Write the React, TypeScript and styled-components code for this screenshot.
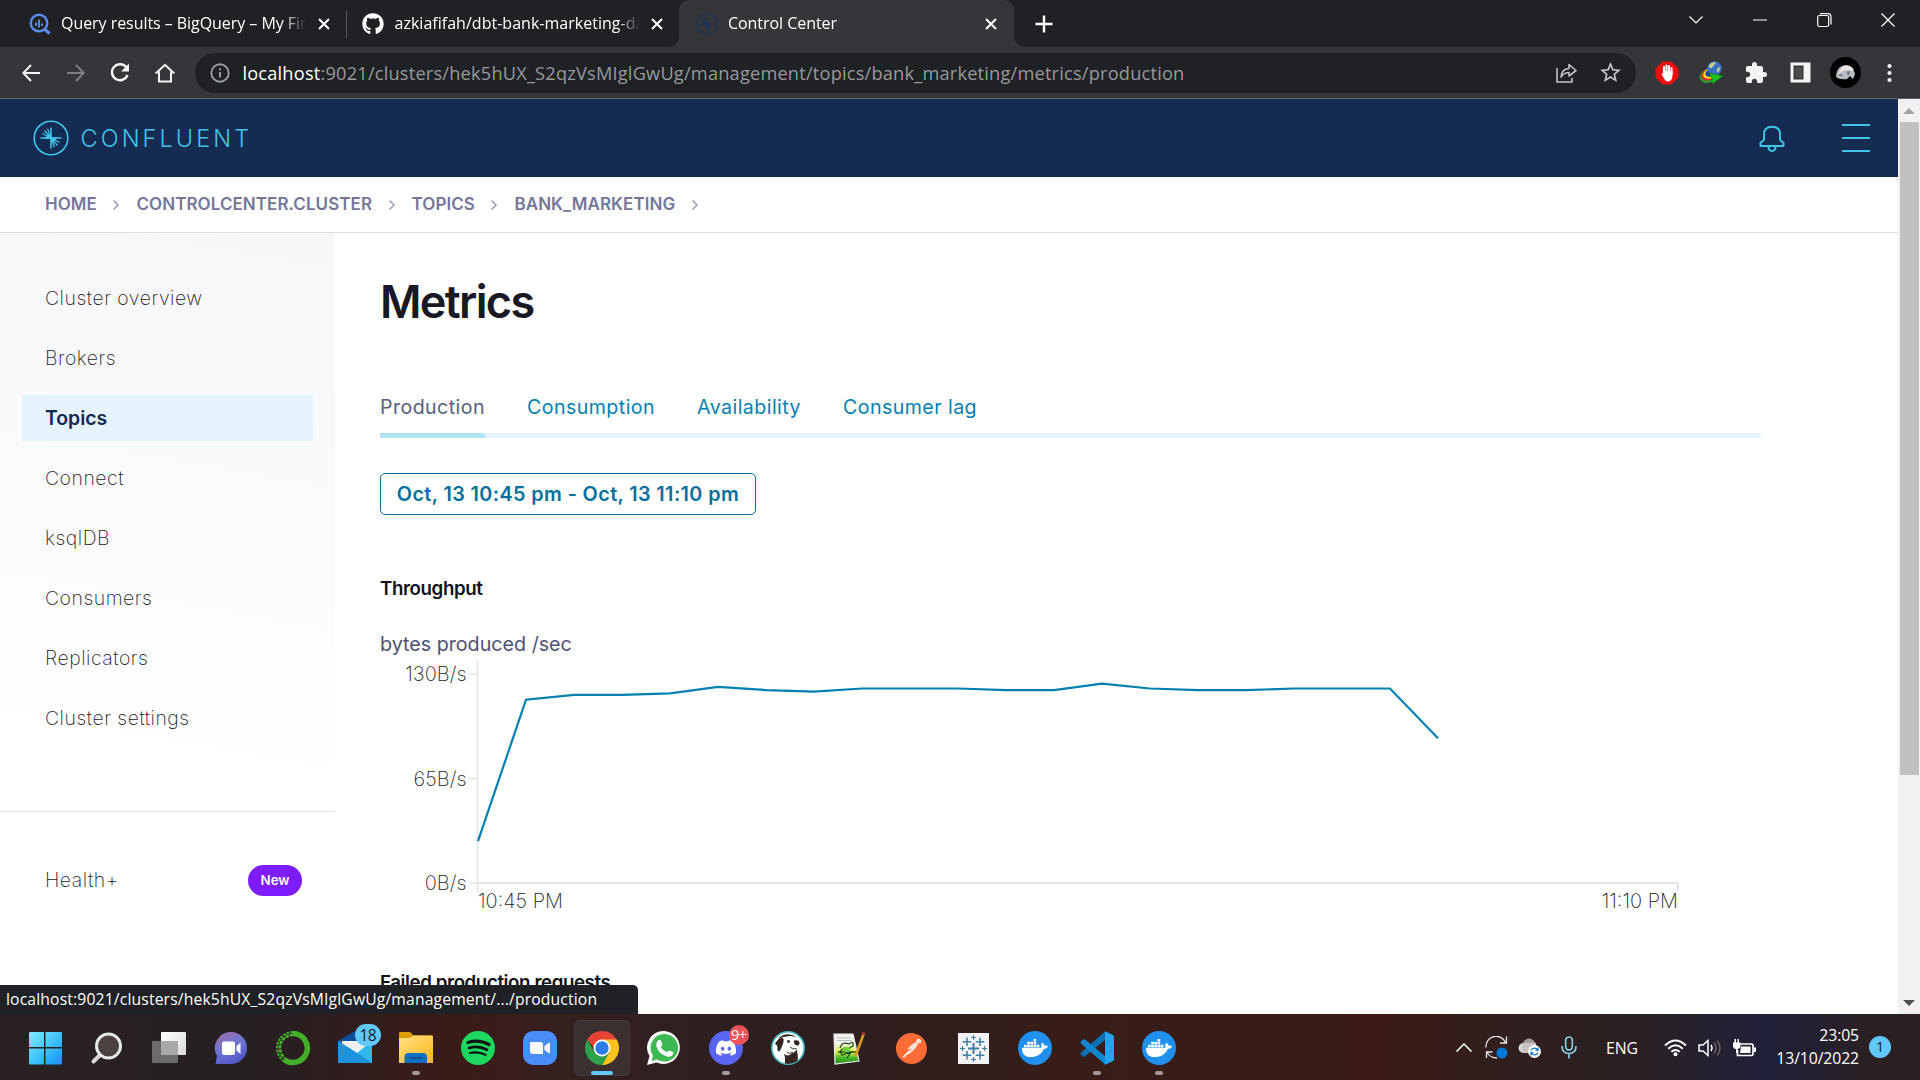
import React from "react";
import styled, { createGlobalStyle, css } from "styled-components";
import { SiPostman } from "react-icons/si";
import { FaDocker, FaDiscord, FaGithub } from "react-icons/fa";
import { MdExtension, MdStarBorder } from "react-icons/md";

const ui = `"Open Sans", "Noto Sans", "Liberation Sans", sans-serif`;
const body = `Inter, "Liberation Sans", sans-serif`;

const GlobalStyle = createGlobalStyle`
  * { box-sizing: border-box; }
  body { margin: 0; background: #fff; overflow: hidden; }
  svg { display: block; flex: none; }
`;

const Screen = styled.div`
  position: relative;
  display: flex;
  flex-direction: column;
  width: 1920px;
  height: 1080px;
  overflow: hidden;
  font-family: ${body};
`;

/* ---------- browser chrome ---------- */

const TabStrip = styled.div`
  display: flex;
  flex: none;
  height: 47px;
  padding-left: 12px;
  background: #202124;
  color: #fff;
  font-family: ${ui};
`;

const Tab = styled.div<{ $active?: boolean; $divided?: boolean }>`
  position: relative;
  display: flex;
  align-items: center;
  width: 333.5px;
  height: 47px;
  padding-left: 16px;
  ${(p) =>
    p.$active &&
    css`
      background: #35363a;
      border-radius: 10px 10px 0 0;
      width: 335px;
      &::before,
      &::after {
        content: "";
        position: absolute;
        bottom: 0;
        width: 10px;
        height: 10px;
      }
      &::before {
        left: -10px;
        background: radial-gradient(circle at 0 0, transparent 9.5px, #35363a 10px);
      }
      &::after {
        right: -10px;
        background: radial-gradient(circle at 100% 0, transparent 9.5px, #35363a 10px);
      }
    `}
  ${(p) =>
    p.$divided &&
    css`
      &::before {
        content: "";
        position: absolute;
        left: 0;
        top: 11px;
        width: 1px;
        height: 27px;
        background: #55575b;
      }
    `}
`;

const TabIcon = styled.span`
  display: flex;
  align-items: center;
  justify-content: center;
  width: 23px;
  height: 23px;
`;

const TabTitle = styled.span<{ $spacing: number }>`
  width: 245px;
  margin: -1px 0 0 10px;
  overflow: hidden;
  white-space: nowrap;
  font-size: 16px;
  line-height: 24px;
  letter-spacing: ${(p) => p.$spacing}px;
  -webkit-mask-image: linear-gradient(90deg, #000 222px, transparent 245px);
  mask-image: linear-gradient(90deg, #000 222px, transparent 245px);
`;

const TabClose = styled.span`
  display: flex;
  justify-content: center;
  width: 34px;
  padding-left: 1px;
`;

const NewTab = styled.div`
  display: flex;
  align-items: center;
  padding-left: 21px;
`;

const WindowControls = styled.div`
  display: flex;
  margin-left: auto;
  height: 40px;
  align-items: center;
  > span {
    display: flex;
    justify-content: center;
    width: 64px;
  }
`;

const Toolbar = styled.div`
  display: flex;
  flex: none;
  align-items: center;
  height: 52px;
  padding-left: 9px;
  background: #35363a;
  border-bottom: 1px solid #5c5e62;
`;

const ToolButton = styled.span`
  display: flex;
  justify-content: center;
  width: 44.6px;
  color: #f1f3f4;
`;

const Omnibox = styled.div`
  display: flex;
  align-items: center;
  width: 1441px;
  height: 40px;
  margin-left: 8px;
  margin-right: 8px;
  padding: 0 14px 0 15px;
  border-radius: 20px;
  background: #202124;
  color: #9aa0a6;
`;

const Url = styled.span`
  flex: 1;
  margin-left: 12px;
  font-family: ${ui};
  font-size: 18.2px;
  line-height: 24px;
  letter-spacing: 0.21px;
  white-space: nowrap;
  color: #96999c;
  b {
    font-weight: 400;
    color: #fff;
  }
`;

const OmniAction = styled.span`
  display: flex;
  justify-content: center;
  width: 24px;
  margin-left: 20px;
  color: #c4c7c9;
`;

/* ---------- page ---------- */

const Viewport = styled.div`
  display: flex;
  flex: 1;
  min-height: 0;
`;

const Page = styled.div`
  display: flex;
  flex-direction: column;
  width: 1898px;
  min-height: 0;
`;

const Scrollbar = styled.div`
  display: flex;
  flex-direction: column;
  justify-content: space-between;
  align-items: center;
  width: 22px;
  padding: 9px 0 8px;
  background: #f1f1f1;
`;

const Thumb = styled.div`
  width: 19px;
  height: 653px;
  margin: 8px 0 auto 1px;
  background: #c1c1c1;
`;

const Header = styled.header`
  display: flex;
  flex: none;
  align-items: center;
  height: 78px;
  padding: 0 28px 0 33px;
  background: #152c52;
  color: #40c4e8;
`;

const Brand = styled.span`
  margin: 2px 0 0 11.5px;
  font-size: 23.5px;
  font-weight: 300;
  line-height: 30px;
  letter-spacing: 3.1px;
`;

const HeaderActions = styled.div`
  display: flex;
  align-items: center;
  gap: 57px;
  margin-left: auto;
  > svg {
    margin-top: 2px;
  }
`;

const Burger = styled.span`
  display: grid;
  gap: 11px;
  width: 28px;
  height: 28px;
  &::before,
  &::after {
    content: "";
  }
  &::before,
  &::after,
  > i {
    height: 2px;
    background: #40c4e8;
  }
`;

const Breadcrumbs = styled.nav`
  display: flex;
  flex: none;
  align-items: center;
  height: 56px;
  padding: 0 0 2px 45px;
  border-bottom: 1px solid #dfe0e6;
  color: #75769a;
  font-size: 17px;
  font-weight: 600;
  letter-spacing: 0.06px;
`;

const Crumb = styled.span`
  display: flex;
  align-items: center;
  svg {
    margin: 2px 16px 0 15.5px;
  }
`;

const Columns = styled.div`
  display: flex;
  flex: 1;
  min-height: 0;
`;

const Sidebar = styled.aside`
  width: 335px;
  flex: none;
  background: linear-gradient(190deg, #f7f7fa 0%, #fbfbfc 35%, #ffffff 68%);
`;

const NavList = styled.div`
  display: flex;
  flex-direction: column;
  gap: 14px;
  height: 579px;
  padding: 42px 22px 0;
  border-bottom: 1px solid #dfe0e6;
`;

const NavItem = styled.a<{ $active?: boolean }>`
  flex: none;
  height: 46px;
  padding-left: 23px;
  font-size: 19.4px;
  line-height: 47.5px;
  letter-spacing: 0.55px;
  font-weight: 250;
  color: #191924;
  ${(p) =>
    p.$active &&
    css`
      background: #e5f4fc;
      color: #16294e;
      font-weight: 600;
      letter-spacing: 0;
    `}
`;

const NavFooter = styled.div`
  display: flex;
  align-items: center;
  justify-content: space-between;
  height: 46px;
  margin: 45px 11px 0 22px;
  padding-right: 22px;
`;

const Badge = styled.span`
  width: 54px;
  height: 31px;
  border-radius: 16px;
  background: #7c1cff;
  color: #fff;
  font-size: 13.3px;
  font-weight: 600;
  line-height: 31px;
  text-align: center;
`;

const Main = styled.main`
  flex: 1;
  display: flex;
  flex-direction: column;
  align-items: flex-start;
  padding-left: 45px;
  overflow: hidden;
`;

const Title = styled.h1`
  margin: 41px 0 0;
  font-size: 45px;
  font-weight: 600;
  line-height: 56px;
  letter-spacing: -1.65px;
  color: #191924;
`;

const MetricTabs = styled.div`
  display: flex;
  gap: 42px;
  width: 1381px;
  height: 60px;
  margin-top: 48px;
  border-bottom: 5px solid #e5f4fc;
`;

const MetricTab = styled.a<{ $active?: boolean }>`
  height: 60px;
  font-size: 19.6px;
  line-height: 58px;
  letter-spacing: 0.44px;
  color: ${(p) => (p.$active ? "#565f80" : "#0480b0")};
  border-bottom: 5px solid ${(p) => (p.$active ? "#b2e3f1" : "transparent")};
`;

const RangeButton = styled.button`
  width: 376px;
  height: 42px;
  margin: 35px 0 0;
  padding: 0;
  border: 1.5px solid #04709b;
  border-radius: 5px;
  background: #fff;
  color: #04709b;
  font: 600 19.8px/38px ${body};
  letter-spacing: 0.4px;
  white-space: nowrap;
`;

const SectionTitle = styled.h2<{ $top: number }>`
  margin: ${(p) => p.$top}px 0 0;
  font-size: 18.7px;
  font-weight: 600;
  line-height: 24px;
  letter-spacing: -0.4px;
  color: #111118;
`;

const ChartTitle = styled.div`
  margin-top: 31px;
  font-size: 19.7px;
  line-height: 24px;
  color: #4f5175;
`;

const ChartSvg = styled.svg`
  overflow: visible;
  text {
    font-family: ${body};
    font-size: 20px;
    font-weight: 250;
    fill: #1c1c24;
  }
`;

/* ---------- overlay and taskbar ---------- */

const StatusBubble = styled.div`
  position: absolute;
  left: 0;
  bottom: 66px;
  width: 638px;
  height: 29px;
  padding-left: 6px;
  border-top-right-radius: 5px;
  background: #202124;
  color: #fff;
  font-family: ${ui};
  font-size: 15.7px;
  line-height: 29px;
  letter-spacing: 0.15px;
  white-space: nowrap;
`;

const Taskbar = styled.div`
  display: flex;
  flex: none;
  height: 66px;
  padding-left: 14.5px;
  background: linear-gradient(
    90deg,
    #2a2122 0%,
    #261f22 13%,
    #3b1b18 24%,
    #32201f 30%,
    #2d1f20 42%,
    #371d18 56%,
    #3b1a15 72%,
    #301f1d 78%,
    #2b2022 85%,
    #20203a 92%,
    #2b2021 98%
  );
  color: #fff;
  font-family: ${ui};
`;

const Slot = styled.div`
  position: relative;
  display: flex;
  justify-content: center;
  align-items: center;
  width: 61.85px;
  height: 66px;
  padding-top: 2px;
`;

const Tile = styled.div<{ $on?: boolean }>`
  display: flex;
  align-items: center;
  justify-content: center;
  width: 56px;
  height: 56px;
  border-radius: 6px;
  ${(p) => p.$on && `background: #3b302f; box-shadow: inset 0 0 0 1px #443938;`}
`;

const Running = styled.i<{ $on?: boolean }>`
  position: absolute;
  bottom: 5px;
  left: 50%;
  width: ${(p) => (p.$on ? 22 : 8)}px;
  height: 4px;
  border-radius: 2px;
  transform: translateX(-50%);
  background: ${(p) => (p.$on ? "#60c8fb" : "#a39a99")};
`;

const Count = styled.b<{ $tone: "blue" | "red" }>`
  position: absolute;
  border-radius: 12px;
  text-align: center;
  font-weight: 400;
  ${(p) =>
    p.$tone === "blue"
      ? `left: 31px; top: 10px; width: 26px; height: 22px; line-height: 22px; font-size: 15.5px; background: #60c8fb; color: #10202c; letter-spacing: -0.6px;`
      : `left: 34px; top: 11px; width: 20px; height: 20px; line-height: 19px; font-size: 14.5px; background: #f0525a; color: #fff; letter-spacing: -0.6px;`}
`;

const Round = styled.span<{ $bg: string; $r?: number }>`
  display: flex;
  align-items: center;
  justify-content: center;
  width: 34px;
  height: 34px;
  border-radius: ${(p) => p.$r ?? 17}px;
  background: ${(p) => p.$bg};
  color: #fff;
`;

const Orbit = styled.span`
  display: flex;
  border-radius: 50%;
  color: #ff6c37;
  background: radial-gradient(circle, #fff 58%, transparent 60%);
`;

const Tray = styled.div`
  display: flex;
  align-items: center;
  margin-left: auto;
  padding-right: 29px;
`;

const TraySlot = styled.span<{ $w: number }>`
  display: flex;
  justify-content: center;
  width: ${(p) => p.$w}px;
  padding-top: 1px;
  font-size: 15.8px;
  letter-spacing: -0.1px;
`;

const Clock = styled.span`
  width: 94px;
  margin-right: 10px;
  text-align: right;
  font-size: 15.8px;
  line-height: 23px;
  letter-spacing: -0.12px;
`;

const Notice = styled.span`
  width: 22px;
  height: 22px;
  margin-top: -1px;
  border-radius: 50%;
  background: #60c8fb;
  color: #12202a;
  font-size: 14px;
  line-height: 22px;
  text-align: center;
`;

/* ---------- drawings ---------- */

const Close = () => (
  <svg width="12" height="12" viewBox="0 0 12 12" stroke="#fff" strokeWidth="2">
    <path d="M1 1L11 11M11 1L1 11" />
  </svg>
);

const Burst = ({ size, color, width }: { size: number; color: string; width: number }) => (
  <svg width={size} height={size} viewBox="0 0 36 36" fill="none" stroke={color} strokeWidth={width}>
    <circle cx="18" cy="18" r="16.8" />
    <path d="M7.5 18H28.5M18 7.5V28.5" />
    <path d="M18 18L9.5 13.5M18 18L11.5 10.5M18 18L14.5 8.8M18 18L26.5 22.5M18 18L24.5 25.5M18 18L21.5 27.2" strokeWidth={width * 0.8} />
    <path d="M18 18L13 17.9L16 15zM18 18L23 18.1L20 21z" fill={color} />
  </svg>
);

const BigQueryMark = () => (
  <svg width="22" height="22" viewBox="0 0 22 22" fill="none" stroke="#5b8bea">
    <circle cx="10" cy="10" r="8.3" strokeWidth="2.4" />
    <path d="M16 16.5L20.5 20.5" strokeWidth="3.2" />
    <path d="M7 9.5V13M10 6.5V14.5M13 10.5V13" strokeWidth="1.9" />
  </svg>
);

const Chevron = () => (
  <svg width="8" height="12" viewBox="0 0 8 12" fill="none" stroke="#9a9bb3" strokeWidth="1.5">
    <path d="M1.5 1.5L6 6L1.5 10.5" />
  </svg>
);

const Bell = () => (
  <svg width="26" height="28" viewBox="0 0 26 28" fill="none" stroke="#40c4e8" strokeWidth="1.9" strokeLinejoin="round">
    <path d="M5 14.5V9.5Q5 1.8 13 1.8Q21 1.8 21 9.5V14.5Q21.2 16 24.5 17.5V21H1.5V17.5Q4.8 16 5 14.5Z" />
    <path d="M9.5 21.5Q9.5 26 13 26Q16.5 26 16.5 21.5" />
  </svg>
);

const DownloadGlobe = () => (
  <svg width="24" height="23" viewBox="0 0 24 23">
    <ellipse cx="10" cy="14.5" rx="10" ry="7" fill="#2f9a35" transform="rotate(-22 10 14)" />
    <ellipse cx="10.5" cy="13.5" rx="8.5" ry="5.6" fill="#e7261c" transform="rotate(-22 10 14)" />
    <ellipse cx="11.5" cy="13" rx="7.2" ry="4.8" fill="#ffe21c" transform="rotate(-22 10 14)" />
    <ellipse cx="13" cy="12.5" rx="6" ry="4" fill="#1d3fa8" transform="rotate(-22 10 14)" />
    <circle cx="15.5" cy="7.5" r="7.2" fill="#3a70c8" />
    <path d="M10 4Q13 0.5 17 1.5L14.5 5L12 7.5Q9.5 7 10 4ZM18.5 7L21.5 6L20 11L17.5 10.5Z" fill="#c3cf8a" />
    <path d="M10 12L24 15L13 23L13.5 18Z" fill="#19c41c" stroke="#12701a" strokeWidth="0.6" />
  </svg>
);

const AdHand = () => (
  <svg width="24" height="24" viewBox="0 0 24 24">
    <path d="M7.5 0.5H16.5L23.5 7.5V16.5L16.5 23.5H7.5L0.5 16.5V7.5Z" fill="#ea0f0f" />
    <path d="M9 12V6M11.5 12V4.5M14 12V5M16.5 13V7" stroke="#fff" strokeWidth="2.1" strokeLinecap="round" />
    <path d="M8 10H17.5V14Q17.5 20 13 20.5Q10.5 20.5 9 17.5L6.5 13Q7 11.5 8.5 13Z" fill="#fff" />
  </svg>
);

const Avatar = () => (
  <svg width="31" height="31" viewBox="0 0 31 31">
    <circle cx="15.5" cy="15.5" r="15.5" fill="#000" />
    <path d="M6 20Q6 12 12 9Q18 6 23 11L25 17L23 22L20 19L17 22Q10 23 6 20Z" fill="#b9bdc6" />
    <path d="M12 10Q18 7 22 11L23 14L15 13L8 17Z" fill="#ece7e2" />
    <path d="M17 14.5L20 14L19 18L17.5 18ZM8 18L12 17L12 19.5Z" fill="#6c6f76" />
  </svg>
);

const WindowsLogo = () => (
  <svg width="34" height="34" viewBox="0 0 34 34">
    <defs>
      <linearGradient id="win" x1="0" y1="0" x2="1" y2="1">
        <stop offset="0" stopColor="#7eeffd" />
        <stop offset="1" stopColor="#0a95f8" />
      </linearGradient>
    </defs>
    <path d="M2 1H16V16H1V2Q1 1 2 1ZM17.5 1H33Q34 1 34 2V16H17.5ZM1 17.5H16V33.5H2Q1 33.5 1 32.5ZM17.5 17.5H34V32.5Q34 33.5 33 33.5H17.5Z" fill="url(#win)" />
  </svg>
);

const SearchLogo = () => (
  <svg width="34" height="34" viewBox="0 0 34 34">
    <path d="M10.5 23.5L3.5 30.5" stroke="#d6d6d6" strokeWidth="4" strokeLinecap="round" />
    <circle cx="18.5" cy="15" r="12" fill="#4b4140" stroke="#e6e8e9" strokeWidth="3" />
  </svg>
);

const TaskViewLogo = () => (
  <svg width="36" height="34" viewBox="0 0 36 34">
    <defs>
      <linearGradient id="tv" x1="0" y1="0" x2="1" y2="1">
        <stop offset="0" stopColor="#fff" />
        <stop offset="1" stopColor="#d9d9d9" />
      </linearGradient>
    </defs>
    <rect x="10" y="1" width="25" height="23" rx="1" fill="url(#tv)" />
    <rect x="1" y="10" width="26" height="22" rx="1" fill="#6d6b6b" />
    <path d="M10 10H27V24H10Z" fill="#a8a8a8" />
  </svg>
);

const ChatLogo = () => (
  <svg width="34" height="34" viewBox="0 0 34 34">
    <defs>
      <linearGradient id="chat" x1="0.1" y1="0" x2="0.6" y2="1">
        <stop offset="0" stopColor="#a06aa8" />
        <stop offset="0.45" stopColor="#7179cf" />
        <stop offset="1" stopColor="#5356c9" />
      </linearGradient>
    </defs>
    <path d="M17 1A16 16 0 1 1 17 33H1.5L3 25A16 16 0 0 1 17 1Z" fill="url(#chat)" />
    <rect x="8" y="10.5" width="13" height="13.5" rx="2" fill="#fff" />
    <path d="M22.5 15L26.5 11.8V23L22.5 19.5Z" fill="#fff" />
  </svg>
);

const AnacondaLogo = () => (
  <svg width="36" height="36" viewBox="0 0 36 36" fill="none" stroke="#43b02a">
    <path d="M18 3.5A14.5 14.5 0 1 1 9 29.5" strokeWidth="5.4" />
    <path d="M18 2A16 16 0 0 0 8 30.5" strokeWidth="2" strokeDasharray="2.6 1.2" />
    <path d="M18 4.8A13.2 13.2 0 0 0 9.5 28" strokeWidth="2.8" strokeDasharray="3.4 1" />
  </svg>
);

const MailLogo = () => (
  <svg width="36" height="34" viewBox="0 0 36 34">
    <path d="M1 10L18 0L35 10V20H1Z" fill="#0a4f9e" />
    <path d="M5 10H32V22H5Z" fill="#eef1f3" />
    <path d="M1 10L20 22L35 10V31Q35 32 34 32H2Q1 32 1 31Z" fill="#31b6ee" />
    <path d="M1 10L35 31.5Q34.5 32 34 32H2Q1 32 1 31Z" fill="#1c93dd" />
  </svg>
);

const FolderLogo = () => (
  <svg width="36" height="34" viewBox="0 0 36 34">
    <defs>
      <linearGradient id="folder" x1="0" y1="0" x2="1" y2="1">
        <stop offset="0" stopColor="#ffe08a" />
        <stop offset="1" stopColor="#fcb813" />
      </linearGradient>
    </defs>
    <path d="M1 2Q1 1 2 1H12L15.5 4.5H34V12H1Z" fill="#dd9d06" />
    <path d="M1 7H12L15.5 4.5H34Q35 4.5 35 5.5V32H1Z" fill="url(#folder)" />
    <path d="M6.5 32V26Q6.5 22 10.5 22H25Q29 22 29 26V32Z" fill="#0f70c4" />
    <path d="M11.5 27H24" stroke="#0a4a8a" strokeWidth="1.5" />
  </svg>
);

const SpotifyLogo = () => (
  <svg width="34" height="34" viewBox="0 0 34 34" fill="none" stroke="#0e130f" strokeLinecap="round">
    <circle cx="17" cy="17" r="17" fill="#1ed760" stroke="none" />
    <path d="M7 11.5Q18 8 28 13.5" strokeWidth="3.2" />
    <path d="M8 17Q17.5 14.2 26 18.8" strokeWidth="2.7" />
    <path d="M9 22Q17 20 24.5 23.8" strokeWidth="2.2" />
  </svg>
);

const CameraGlyph = () => (
  <svg width="20" height="12" viewBox="0 0 20 12" fill="#fff">
    <path d="M0 1Q0 0 1 0H10Q13 0 13 3V12H3Q0 12 0 9ZM14.5 4L19 0.8Q20 0.5 20 1.5V10.5Q20 11.5 19 11.2L14.5 8Z" />
  </svg>
);

const ChromeLogo = () => (
  <svg width="34" height="34" viewBox="0 0 34 34">
    <path d="M17 17L2.3 8.5A17 17 0 0 1 31.7 8.5Z" fill="#e64335" />
    <path d="M17 17V8.5H31.7A17 17 0 0 1 17 34L24.4 21.2Z" fill="#fcc31e" />
    <path d="M17 17L24.4 21.2L17 34A17 17 0 0 1 2.3 8.5L9.6 21.2Z" fill="#2da14c" />
    <path d="M2.3 8.5H17V17H9Z" fill="#e64335" />
    <circle cx="17" cy="17" r="8.5" fill="#fff" />
    <circle cx="17" cy="17" r="6.7" fill="#2b7bea" />
  </svg>
);

const WhatsappLogo = () => (
  <svg width="36" height="36" viewBox="0 0 36 36">
    <path d="M18.5 1A16.5 16.5 0 1 1 10.5 32.5L1 35L3.5 26A16.5 16.5 0 0 1 18.5 1Z" fill="#fff" />
    <path d="M18.5 4A13.8 13.8 0 1 1 11 29.5L5.5 31L7 25.5A13.8 13.8 0 0 1 18.5 4Z" fill="#3cb953" />
    <path d="M11.5 11Q13 9 14.5 10L16.3 14Q16.5 15 14.8 17Q17 21 21 22.3L23 20.2L27 22Q28 22.5 27 24.5Q25 27.5 21 26.5Q12.5 24 10.3 16Q10 13 11.5 11Z" fill="#fff" />
  </svg>
);

const BeaverLogo = () => (
  <svg width="36" height="36" viewBox="0 0 36 36">
    <circle cx="18" cy="18" r="16.2" fill="#fff" stroke="#3fb4bd" strokeWidth="1.6" />
    <g fill="#33241f">
      <path d="M8 9Q13 3.5 20 4.5Q24 5 26.5 7.5Q22 5.8 18 6.2Q12 7 8 9Z" />
      <path d="M5 14Q8 7 13 8Q14.5 10 12.5 15Q10.5 21 8.5 21.5Q7 21 7.5 17Q7.5 15 5 14Z" />
      <circle cx="18.5" cy="11.5" r="1.4" />
      <path d="M24 10.5Q29 9.5 29.5 12.5Q29.5 16 26.5 15.5Q23.5 14 24 10.5Z" />
      <path d="M15 31Q15.5 27 14 24Q18 27 21.5 23.5Q25.5 22 26.5 19Q28.5 26 27.5 31Q21 35 15 33.5Z" />
    </g>
    <path d="M20 17Q22.5 20 26.5 18.5M17 22Q19 25 23 22" stroke="#33241f" strokeWidth="0.9" fill="none" />
  </svg>
);

const NotepadLogo = () => (
  <svg width="34" height="34" viewBox="0 0 34 34">
    <defs>
      <linearGradient id="npp" x1="0" y1="0" x2="0" y2="1">
        <stop offset="0.3" stopColor="#f4f5f0" />
        <stop offset="0.6" stopColor="#e2ee4c" />
        <stop offset="0.8" stopColor="#3fb526" />
        <stop offset="1" stopColor="#2c9020" />
      </linearGradient>
    </defs>
    <path d="M2 3L21 3L27 30L3 33Z" fill="url(#npp)" stroke="#e9e9e9" strokeWidth="1.2" />
    <path d="M5 7H19M5 9.5H20" stroke="#b9bcc4" strokeWidth="1" />
    <path d="M8 17Q10 10 17 13Q22 9 21 15Q17 18 12 17Q6 20 10 24L19 21L15 27M6 21H24" fill="none" stroke="#1e4a18" strokeWidth="1.3" />
    <path d="M10 18Q14 14 19 17L17 21Q12 22 10 18Z" fill="#6fd03c" />
    <path d="M23.5 25L32 2" stroke="#d89a1c" strokeWidth="2.6" />
    <path d="M31.2 4L32.2 1.5" stroke="#b33630" strokeWidth="2.8" />
  </svg>
);

const TableauLogo = () => (
  <svg width="31" height="31" viewBox="0 0 31 31" stroke="#3f7fa8">
    <rect width="31" height="31" fill="#f3f4f5" stroke="none" />
    <path d="M15.5 10V21M10 15.5H21" strokeWidth="2" />
    <path d="M9 4.5V13M4.7 8.7H13.3M22 4.5V13M17.7 8.7H26.3M9 18V26.5M4.7 22.2H13.3M22 18V26.5M17.7 22.2H26.3" strokeWidth="1.5" />
    <path d="M15.5 2V7M13 4.5H18M15.5 24V29M13 26.5H18M4.5 13V18M2 15.5H7M26.5 13V18M24 15.5H29" strokeWidth="1.1" />
  </svg>
);

const VsCodeLogo = () => (
  <svg width="34" height="34" viewBox="0 0 34 34">
    <path d="M1 23.5Q0 22.5 1 21.5L25 0.5V9L5 25.5Q4 26 3 25.5Z" fill="#0a6fb0" />
    <path d="M1 10.5Q0 11.5 1 12.5L25 33.5V25L5 8.5Q4 8 3 8.5Z" fill="#0e86cf" />
    <path d="M25 0.3L33 4Q34 4.5 34 5.5V28.5Q34 29.5 33 30L25 33.7Z" fill="#27a3ee" />
  </svg>
);

const DockerLogo = () => (
  <Round $bg="#1f90ed">
    <FaDocker size={26} />
  </Round>
);

const apps: { name: string; icon: React.ReactNode; running?: boolean; active?: boolean; badge?: React.ReactNode }[] = [
  { name: "start", icon: <WindowsLogo /> },
  { name: "search", icon: <SearchLogo /> },
  { name: "task-view", icon: <TaskViewLogo /> },
  { name: "chat", icon: <ChatLogo /> },
  { name: "anaconda", icon: <AnacondaLogo /> },
  { name: "mail", icon: <MailLogo />, badge: <Count $tone="blue">18</Count> },
  { name: "explorer", icon: <FolderLogo />, running: true },
  { name: "spotify", icon: <SpotifyLogo /> },
  { name: "zoom", icon: <Round $bg="#4a8cfa" $r={10}><CameraGlyph /></Round> },
  { name: "chrome", icon: <ChromeLogo />, running: true, active: true },
  { name: "whatsapp", icon: <WhatsappLogo /> },
  { name: "discord", icon: <Round $bg="#5865f2"><FaDiscord size={22} /></Round>, running: true, badge: <Count $tone="red">9+</Count> },
  { name: "dbeaver", icon: <BeaverLogo /> },
  { name: "notepad", icon: <NotepadLogo /> },
  { name: "postman", icon: <Orbit><SiPostman size={31} /></Orbit> },
  { name: "tableau", icon: <TableauLogo /> },
  { name: "docker", icon: <DockerLogo /> },
  { name: "vscode", icon: <VsCodeLogo />, running: true },
  { name: "docker-desktop", icon: <DockerLogo />, running: true },
];

const navItems = ["Cluster overview", "Brokers", "Topics", "Connect", "ksqlDB", "Consumers", "Replicators", "Cluster settings"];
const crumbs = ["HOME", "CONTROLCENTER.CLUSTER", "TOPICS", "BANK_MARKETING"];
const metricTabs = ["Production", "Consumption", "Availability", "Consumer lag"];

/* bytes per second, one sample a minute from 10:45 PM */
const samples = [26, 114, 117, 117, 118, 122, 120, 119, 121, 121, 121, 120, 120, 124, 121, 120, 120, 121, 121, 121, 90];

const ThroughputChart = () => {
  const left = 98;
  const base = 227;
  const y = (v: number) => base - (v * 209) / 130;
  const line = samples.map((v, i) => `${left + i * 48},${y(v).toFixed(1)}`).join(" ");
  return (
    <ChartSvg width="1381" height="256" viewBox="0 0 1381 256">
      <g stroke="#e3e4ea" strokeWidth="1.5" fill="none">
        <path d={`M${left - 0.5} 4V236`} />
        <path d={`M${left} ${base}H1298V235`} strokeWidth="2" />
        {[0, 65, 130].map((v) => (
          <path key={v} d={`M89 ${y(v)}H${left}`} />
        ))}
      </g>
      <polyline points={line} fill="none" stroke="#0480b0" strokeWidth="2.2" />
      {[0, 65, 130].map((v) => (
        <text key={v} x="86.5" y={y(v) + 7} textAnchor="end">{`${v}B/s`}</text>
      ))}
      <text x={left} y="252">10:45 PM</text>
      <text x="1298" y="252" textAnchor="end">11:10 PM</text>
    </ChartSvg>
  );
};

export default function App() {
  return (
    <Screen>
      <GlobalStyle />
      <TabStrip>
        <Tab>
          <TabIcon><BigQueryMark /></TabIcon>
          <TabTitle $spacing={-0.05}>Query results – BigQuery – My First</TabTitle>
          <TabClose><Close /></TabClose>
        </Tab>
        <Tab $divided>
          <TabIcon><FaGithub size={22} /></TabIcon>
          <TabTitle $spacing={0.02}>azkiafifah/dbt-bank-marketing-data</TabTitle>
          <TabClose><Close /></TabClose>
        </Tab>
        <Tab $active>
          <TabIcon><Burst size={22} color="#1a3358" width={1.8} /></TabIcon>
          <TabTitle $spacing={-0.05}>Control Center</TabTitle>
          <TabClose><Close /></TabClose>
        </Tab>
        <NewTab>
          <svg width="18" height="18" viewBox="0 0 18 18" stroke="#fff" strokeWidth="2.4"><path d="M0.5 9H17.5M9 0.5V17.5" /></svg>
        </NewTab>
        <WindowControls>
          <span><svg width="14" height="8" viewBox="0 0 14 8" fill="none" stroke="#fff" strokeWidth="1.1"><path d="M0.5 0.5L7 7L13.5 0.5" /></svg></span>
          <span><svg width="14" height="2" viewBox="0 0 14 2"><path d="M0 0.5H14V1.5H0Z" fill="#fff" /></svg></span>
          <span>
            <svg width="15" height="15" viewBox="0 0 15 15" fill="none" stroke="#fff" strokeWidth="1.2">
              <rect x="0.7" y="2.5" width="11" height="11" rx="1.8" /><path d="M3 0.7H11Q14 0.7 14 4V11.5" />
            </svg>
          </span>
          <span><svg width="14" height="14" viewBox="0 0 14 14" stroke="#fff" strokeWidth="1.2"><path d="M0.5 0.5L13.5 13.5M13.5 0.5L0.5 13.5" /></svg></span>
        </WindowControls>
      </TabStrip>

      <Toolbar>
        <ToolButton>
          <svg width="18" height="18" viewBox="0 0 18 18" fill="none" stroke="#f1f3f4" strokeWidth="2"><path d="M18 9H1.5M9 1L1.3 9L9 17" /></svg>
        </ToolButton>
        <ToolButton>
          <svg width="18" height="18" viewBox="0 0 18 18" fill="none" stroke="#7c7e82" strokeWidth="2"><path d="M0 9H16.5M9 1L16.7 9L9 17" /></svg>
        </ToolButton>
        <ToolButton>
          <svg width="20" height="19" viewBox="0 0 20 19" fill="none" stroke="#f1f3f4" strokeWidth="2.4">
            <path d="M16.5 4.5A8 8 0 1 0 17.5 12" /><path d="M19 0.5V8.5H11Z" fill="#f1f3f4" stroke="none" />
          </svg>
        </ToolButton>
        <ToolButton>
          <svg width="20" height="20" viewBox="0 0 20 20" fill="none" stroke="#f1f3f4" strokeWidth="2"><path d="M4 18.5V9.5H1.8L10 1.8L18.2 9.5H16V18.5Z" /></svg>
        </ToolButton>
        <Omnibox>
          <svg width="20" height="20" viewBox="0 0 20 20" fill="none" stroke="#9aa0a6" strokeWidth="1.9"><circle cx="10" cy="10" r="8.7" /><path d="M10 9V14.5M10 5.3V7.3" /></svg>
          <Url><b>localhost</b>:9021/clusters/hek5hUX_S2qzVsMIglGwUg/management/topics/bank_marketing/metrics/production</Url>
          <OmniAction>
            <svg width="21" height="20" viewBox="0 0 21 20" fill="none" stroke="#c0c3c5" strokeWidth="1.6">
              <path d="M1 5V19H16V15" /><path d="M5 14Q5.5 6 13 5.5V1.5L20 7.5L13 13V9.5Q8 9.5 5 14Z" strokeLinejoin="round" />
            </svg>
          </OmniAction>
          <OmniAction><MdStarBorder size={25} /></OmniAction>
        </Omnibox>
        <ToolButton><AdHand /></ToolButton>
        <ToolButton><DownloadGlobe /></ToolButton>
        <ToolButton><MdExtension size={24} /></ToolButton>
        <ToolButton>
          <svg width="21" height="21" viewBox="0 0 21 21"><path fillRule="evenodd" d="M0.5 0.5H20.5V20.5H0.5ZM3.5 3.5V17.5H13.5V3.5Z" fill="#f1f3f4" /><path d="M5 5H12V16H5Z" fill="#4a4b4f" /></svg>
        </ToolButton>
        <ToolButton><Avatar /></ToolButton>
        <ToolButton>
          <svg width="5" height="20" viewBox="0 0 5 20" fill="#f1f3f4"><circle cx="2.5" cy="3" r="2.1" /><circle cx="2.5" cy="10" r="2.1" /><circle cx="2.5" cy="17" r="2.1" /></svg>
        </ToolButton>
      </Toolbar>

      <Viewport>
        <Page>
          <Header>
            <Burst size={36} color="#40c4e8" width={1.6} />
            <Brand>CONFLUENT</Brand>
            <HeaderActions>
              <Bell />
              <Burger><i /></Burger>
            </HeaderActions>
          </Header>
          <Breadcrumbs>
            {crumbs.map((c) => (
              <Crumb key={c}>{c}<Chevron /></Crumb>
            ))}
          </Breadcrumbs>
          <Columns>
            <Sidebar>
              <NavList>
                {navItems.map((n) => (
                  <NavItem key={n} $active={n === "Topics"}>{n}</NavItem>
                ))}
              </NavList>
              <NavFooter>
                <NavItem>Health+</NavItem>
                <Badge>New</Badge>
              </NavFooter>
            </Sidebar>
            <Main>
              <Title>Metrics</Title>
              <MetricTabs>
                {metricTabs.map((t, i) => (
                  <MetricTab key={t} $active={i === 0}>{t}</MetricTab>
                ))}
              </MetricTabs>
              <RangeButton>Oct, 13 10:45 pm - Oct, 13 11:10 pm</RangeButton>
              <SectionTitle $top={62}>Throughput</SectionTitle>
              <ChartTitle>bytes produced /sec</ChartTitle>
              <ThroughputChart />
              <SectionTitle $top={59}>Failed production requests</SectionTitle>
            </Main>
          </Columns>
        </Page>
        <Scrollbar>
          <svg width="12" height="6" viewBox="0 0 12 6"><path d="M6 0L12 6H0Z" fill="#a3a3a3" /></svg>
          <Thumb />
          <svg width="12" height="6" viewBox="0 0 12 6"><path d="M6 6L12 0H0Z" fill="#505050" /></svg>
        </Scrollbar>
      </Viewport>

      <StatusBubble>localhost:9021/clusters/hek5hUX_S2qzVsMIglGwUg/management/.../production</StatusBubble>

      <Taskbar>
        {apps.map((a) => (
          <Slot key={a.name}>
            <Tile $on={a.active}>{a.icon}</Tile>
            {a.badge}
            {a.running && <Running $on={a.active} />}
          </Slot>
        ))}
        <Tray>
          <TraySlot $w={34}>
            <svg width="16" height="9" viewBox="0 0 16 9" fill="none" stroke="#fff" strokeWidth="1.5"><path d="M0.5 8.5L8 1L15.5 8.5" /></svg>
          </TraySlot>
          <TraySlot $w={31}>
            <svg width="23" height="23" viewBox="0 0 23 23" fill="none" stroke="#e8e6e6" strokeWidth="1.3">
              <path d="M1 11.5A10.2 10.2 0 0 1 20.5 6.5M21.5 0.5V7H15M1.5 22V16H7.5M2 16.5Q5.5 22 12 22" />
              <circle cx="17" cy="17" r="5.5" fill="#0078d7" stroke="none" />
            </svg>
          </TraySlot>
          <TraySlot $w={35}>
            <svg width="23" height="20" viewBox="0 0 23 20">
              <circle cx="11" cy="7" r="6.5" fill="#a39c9b" /><circle cx="5.5" cy="10" r="5" fill="#d9d6d6" /><path d="M4 5H18V15H4Z" fill="#c9c5c4" />
              <circle cx="16.5" cy="13.5" r="6.5" fill="#fff" />
              <path d="M13 12.5A4 4 0 0 1 20 12M20 14.5A4 4 0 0 1 13 15M20 9.5V12.3H17.5M13 17.5V14.7H15.5" fill="none" stroke="#1a76c8" strokeWidth="1.3" />
            </svg>
          </TraySlot>
          <TraySlot $w={43}>
            <svg width="16" height="23" viewBox="0 0 16 23" fill="none" stroke="#86cbe0" strokeWidth="1.7">
              <rect x="4.7" y="1" width="6.6" height="13" rx="3.3" /><path d="M1 10Q1 17.5 8 17.5Q15 17.5 15 10M8 17.5V22.5" />
            </svg>
          </TraySlot>
          <TraySlot $w={64}>ENG</TraySlot>
          <TraySlot $w={43}>
            <svg width="23" height="18" viewBox="0 0 23 18" fill="none" stroke="#fff" strokeWidth="1.9">
              <path d="M1 6.5Q11.5 -3.5 22 6.5M4.2 9.7Q11.5 3 18.8 9.7M7.3 12.8Q11.5 9 15.7 12.8" /><circle cx="11.5" cy="15.3" r="2" fill="#fff" stroke="none" />
            </svg>
          </TraySlot>
          <TraySlot $w={25}>
            <svg width="24" height="18" viewBox="0 0 24 18" fill="none" stroke="#fff" strokeWidth="1.5">
              <path d="M1 6H5L10 1.5V16.5L5 12H1Z" /><path d="M13 6Q15 9 13 12" /><path d="M16 3.5Q20 9 16 14.5M19 1.5Q25 9 19 16.5" stroke="#6d6463" />
            </svg>
          </TraySlot>
          <TraySlot $w={43}>
            <svg width="24" height="18" viewBox="0 0 24 18">
              <path d="M7 5H19.5Q21 5 21 6.5V15Q21 16.5 19.5 16.5H5.5V11" fill="none" stroke="#fff" strokeWidth="1.7" />
              <path d="M9 7.5H18.5V14H8ZM22 8.5H24V13H22ZM1 3.5H8.5V7Q8.5 9.5 5.5 10V14H4V10Q1 9.5 1 7ZM2.5 0H4V3.5H2.5ZM5.5 0H7V3.5H5.5Z" fill="#fff" />
            </svg>
          </TraySlot>
          <Clock>23:05<br />13/10/2022</Clock>
          <Notice>1</Notice>
        </Tray>
      </Taskbar>
    </Screen>
  );
}
